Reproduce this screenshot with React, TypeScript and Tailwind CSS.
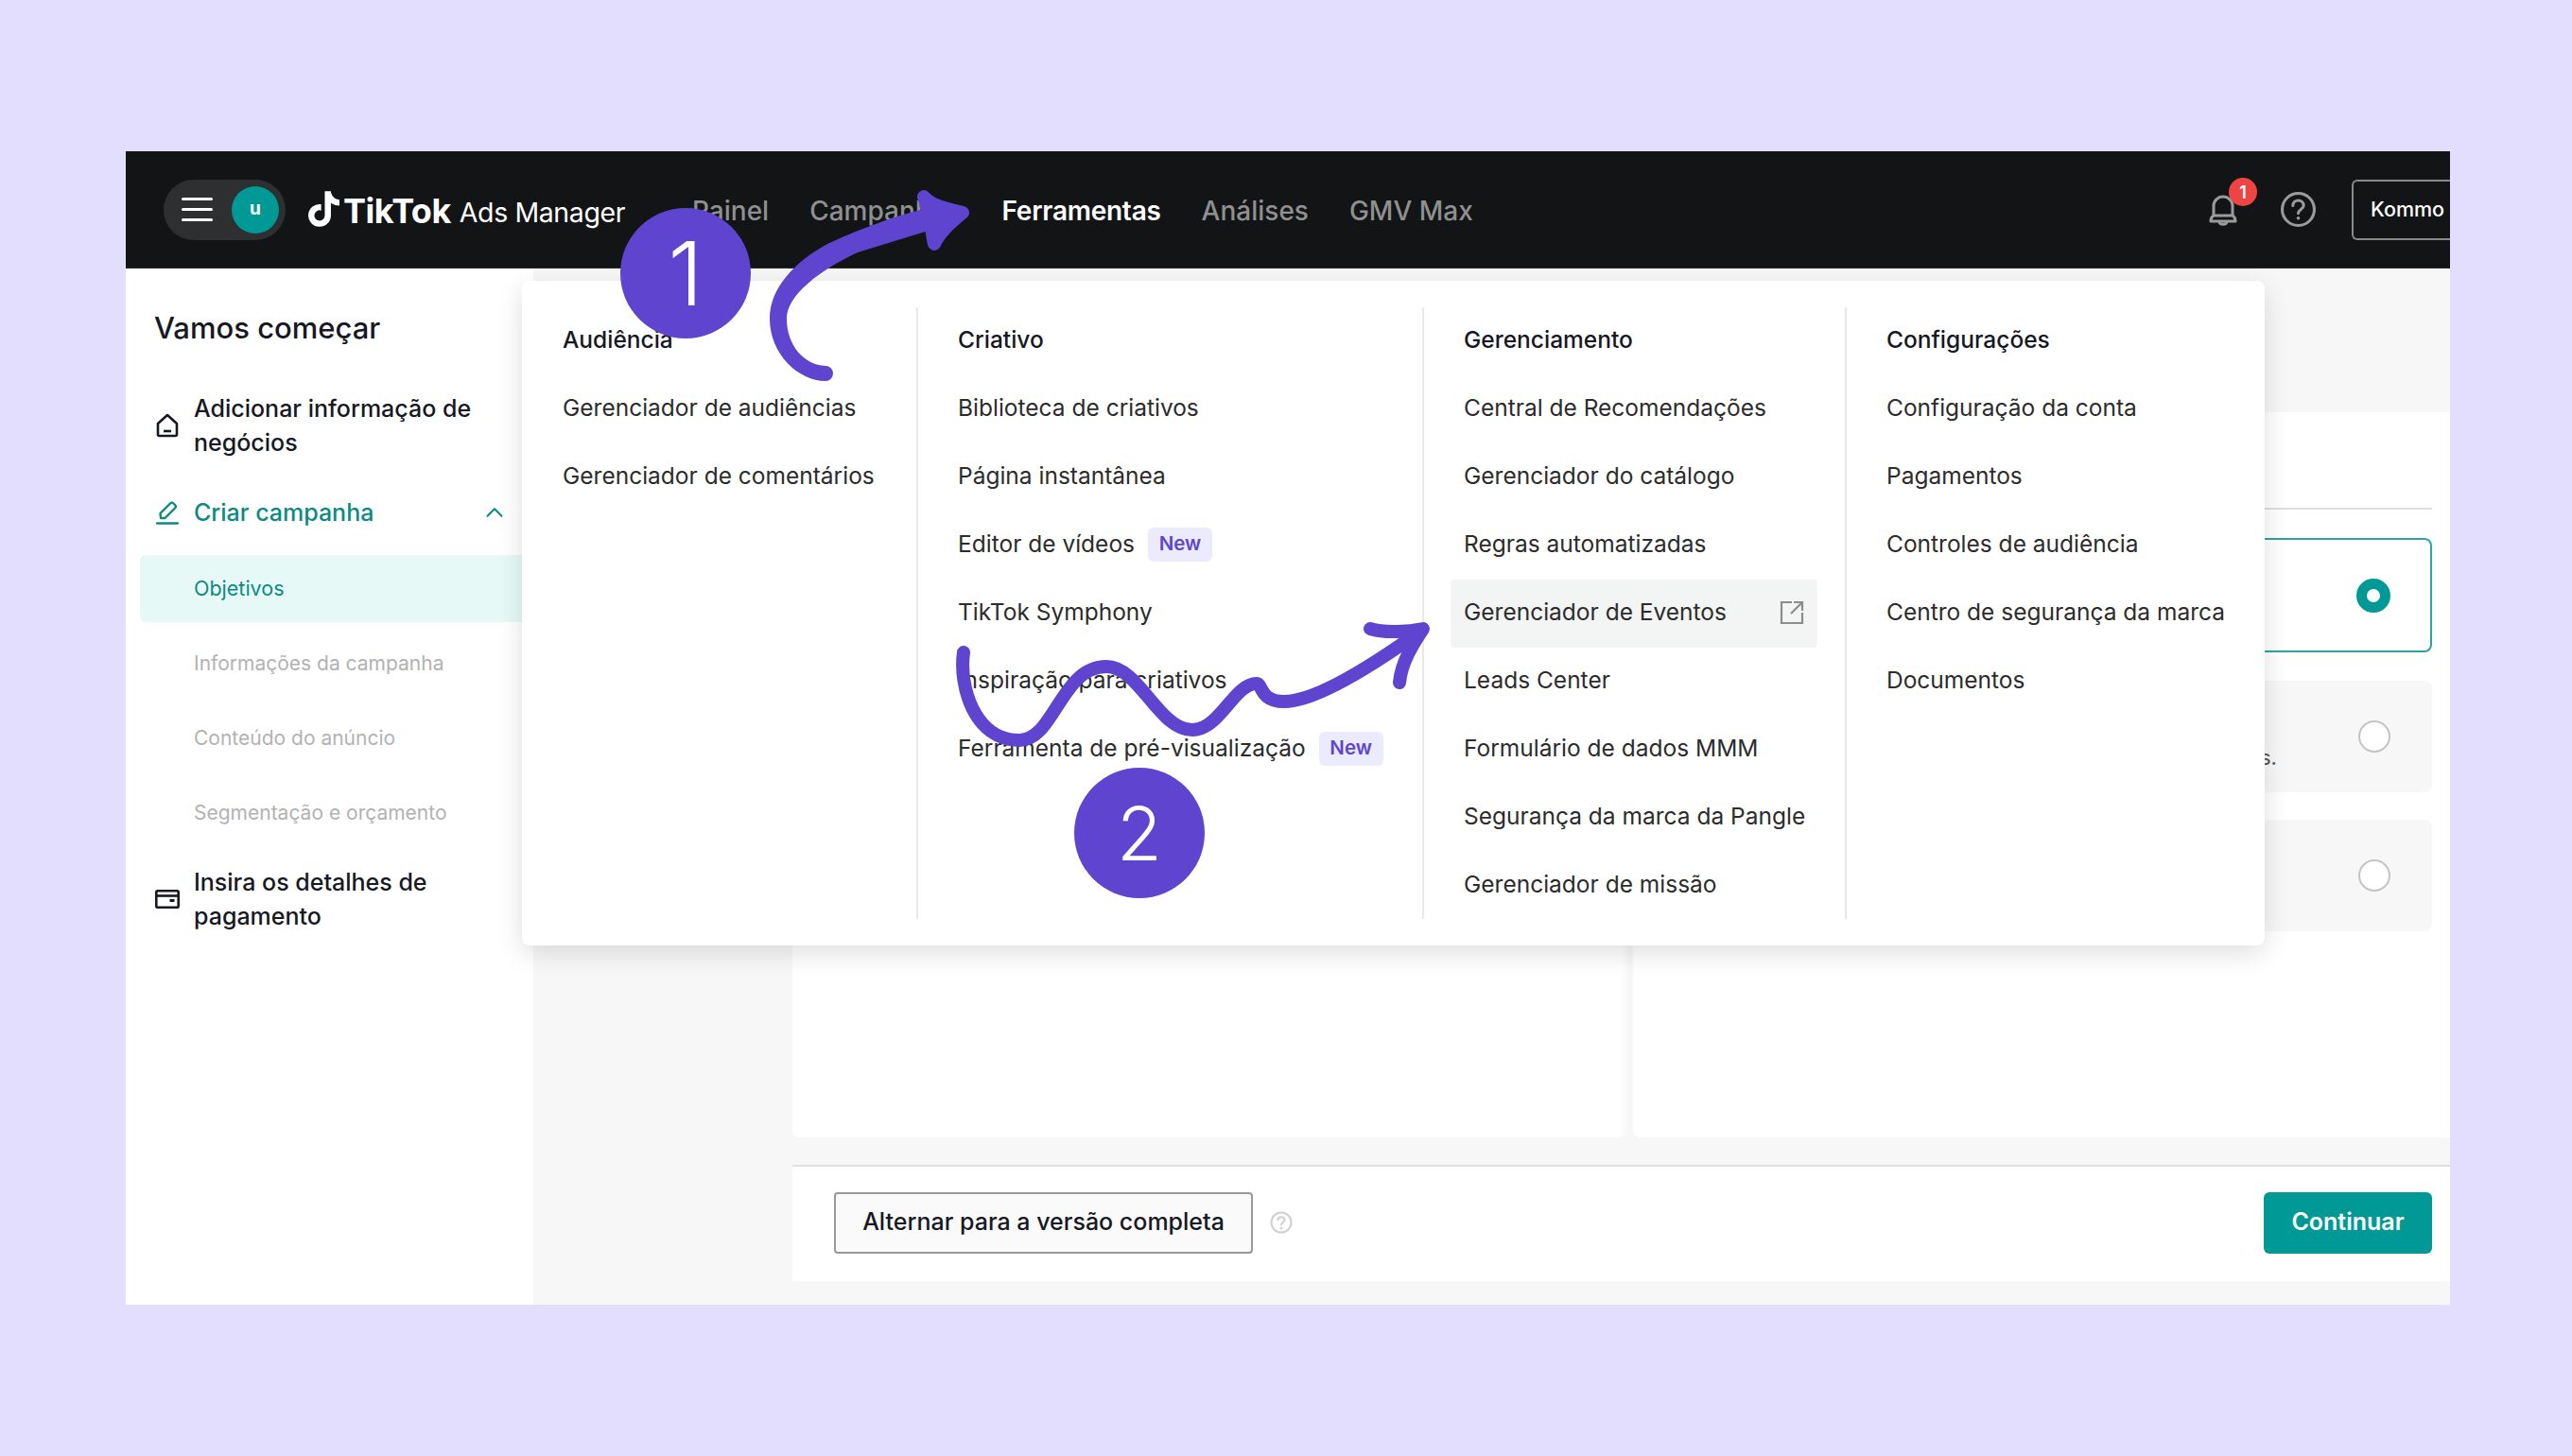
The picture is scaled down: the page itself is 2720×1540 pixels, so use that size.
import { ChevronUp } from "lucide-react";
import { FaTiktok } from "react-icons/fa6";

const navItems = ["Painel", "Campanha", "Ferramentas", "Análises", "GMV Max"];

type MenuItem = { label: string; badge?: boolean; hovered?: boolean };

const columns: { title: string; width: string; items: MenuItem[] }[] = [
  {
    title: "Audiência",
    width: "w-[417px] pl-[43px]",
    items: [{ label: "Gerenciador de audiências" }, { label: "Gerenciador de comentários" }],
  },
  {
    title: "Criativo",
    width: "w-[535px] border-l-2 pl-[42px]",
    items: [
      { label: "Biblioteca de criativos" },
      { label: "Página instantânea" },
      { label: "Editor de vídeos", badge: true },
      { label: "TikTok Symphony" },
      { label: "Inspiração para criativos" },
      { label: "Ferramenta de pré-visualização", badge: true },
    ],
  },
  {
    title: "Gerenciamento",
    width: "w-[447px] border-l-2 pl-[42px]",
    items: [
      { label: "Central de Recomendações" },
      { label: "Gerenciador do catálogo" },
      { label: "Regras automatizadas" },
      { label: "Gerenciador de Eventos", hovered: true },
      { label: "Leads Center" },
      { label: "Formulário de dados MMM" },
      { label: "Segurança da marca da Pangle" },
      { label: "Gerenciador de missão" },
    ],
  },
  {
    title: "Configurações",
    width: "flex-1 border-l-2 pl-[42px]",
    items: [
      { label: "Configuração da conta" },
      { label: "Pagamentos" },
      { label: "Controles de audiência" },
      { label: "Centro de segurança da marca" },
      { label: "Documentos" },
    ],
  },
];

function Navbar() {
  return (
    <header className="flex h-[124px] shrink-0 items-center bg-[#131416] border-b border-[#2a2a2a]">
      <div className="ml-[40px] flex h-[64px] w-[129px] items-center rounded-full bg-[#2e2f31] pl-[19px]">
        <div className="flex w-[33px] flex-col gap-[8px]">
          <span className="h-[3px] rounded-full bg-white" />
          <span className="h-[3px] rounded-full bg-white" />
          <span className="h-[3px] rounded-full bg-white" />
        </div>
        <div className="ml-[20px] flex h-[50px] w-[50px] items-center justify-center rounded-full bg-[#009995] text-[19px] font-bold text-white">
          u
        </div>
      </div>
      <FaTiktok className="ml-[24px] mb-[2px] h-[38px] w-[33px] text-white" />
      <span className="ml-[4px] mt-[2px] text-[36px] leading-none font-bold tracking-[-0.5px] text-white">TikTok</span>
      <span className="ml-[9px] mt-[7px] text-[28.5px] leading-none tracking-[-0.4px] text-white">Ads Manager</span>
      <nav className="ml-[71px] mt-[3px] flex text-[28px] font-medium text-[#8f9090]">
        <span>{navItems[0]}</span>
        <span className="ml-[43px]">{navItems[1]}</span>
        <span className="ml-[59px] font-semibold tracking-[-0.25px] text-white">{navItems[2]}</span>
        <span className="ml-[43px]">{navItems[3]}</span>
        <span className="ml-[43px]">{navItems[4]}</span>
      </nav>
      <div className="ml-auto flex items-center">
        <div className="relative h-[37px] w-[34px]">
          <svg viewBox="0 0 34 37" className="h-full w-full" fill="none" stroke="#9b9b9b" strokeWidth="3">
            <path d="M7 25V15a10 10 0 0 1 20 0v10" />
            <path d="M4 31c0-3 1-5 3-6h20c2 1 3 3 3 6z" strokeLinejoin="round" />
            <path d="M13 32c1 3 7 3 8 0" />
          </svg>
          <span className="absolute -top-[15px] left-[23px] flex h-[30px] w-[30px] items-center justify-center rounded-full bg-[#ef4444] text-[18px] font-semibold text-white">
            1
          </span>
        </div>
        <svg viewBox="0 0 36 36" className="ml-[44px] h-[37px] w-[37px]" fill="none" stroke="#9b9b9b" strokeWidth="3">
          <circle cx="18" cy="18" r="16.5" />
          <path d="M12.5 14c0-7 11-7 11 0 0 4-5.500 4-5.500 8" strokeLinecap="round" />
          <circle cx="18" cy="27" r="1" fill="#9b9b9b" strokeWidth="1.500" />
        </svg>
        <div className="ml-[38px] flex h-[64px] w-[104px] items-center rounded-l-[6px] border-y-2 border-l-2 border-[#8a8a8a] pl-[18px] text-[21.5px] font-medium whitespace-nowrap text-white">
          Kommo
        </div>
      </div>
    </header>
  );
}

function HomeIcon() {
  return (
    <svg viewBox="0 0 24 26" className="h-[26px] w-[24px] shrink-0" fill="none" stroke="#161823" strokeWidth="2.600" strokeLinejoin="round">
      <path d="M2 11 12 2l10 9v11.500a1.500 1.500 0 0 1-1.500 1.500h-17A1.500 1.500 0 0 1 2 22.500z" />
      <path d="M8 19h8" />
    </svg>
  );
}

function PencilIcon() {
  return (
    <svg viewBox="0 0 24 25" className="h-[25px] w-[24px] shrink-0" fill="none" stroke="#0b8a84" strokeWidth="2.400" strokeLinejoin="round">
      <path d="M5 18 4.500 13 15 2.500a2.500 2.500 0 0 1 3.500 0l1.500 1.500a2.500 2.500 0 0 1 0 3.500L9.500 18z" />
      <path d="M1 23.500h22" strokeLinecap="round" />
    </svg>
  );
}

function CardIcon() {
  return (
    <svg viewBox="0 0 26 20" className="h-[20px] w-[26px] shrink-0" fill="none" stroke="#161823" strokeWidth="2.600">
      <rect x="1.300" y="1.300" width="23.400" height="17.400" rx="1.500" />
      <path d="M1.300 6.500h23.400" />
      <path d="M15.500 11.500h5" strokeWidth="3" />
    </svg>
  );
}

function Sidebar() {
  return (
    <aside className="w-[431px] shrink-0 bg-white pt-[43px]">
      <h2 className="ml-[30px] text-[31px] leading-[40px] font-medium text-[#161823]">Vamos começar</h2>
      <div className="mt-[47px] ml-[32px] flex items-center gap-[16px]">
        <HomeIcon />
        <p className="w-[320px] text-[25px] leading-[36px] font-medium text-[#161823]">Adicionar informação de negócios</p>
      </div>
      <div className="mt-[38px] ml-[32px] flex items-center gap-[16px]">
        <PencilIcon />
        <p className="text-[25px] leading-[36px] font-medium text-[#0b8a84]">Criar campanha</p>
        <ChevronUp className="ml-auto mr-[26px] h-[30px] w-[30px] text-[#0b8a84]" strokeWidth={1.6} />
      </div>
      <div className="mt-[27px] ml-[15px] flex h-[71px] items-center rounded-l-[6px] bg-[#e6f9f7] pl-[57px] text-[21.5px] text-[#0b8a84]">
        Objetivos
      </div>
      <div className="mt-[4px] pl-[72px] text-[21px] text-[#b2b2b2]">
        <p className="flex h-[79px] items-center">Informações da campanha</p>
        <p className="flex h-[79px] items-center">Conteúdo do anúncio</p>
        <p className="flex h-[79px] items-center">Segmentação e orçamento</p>
      </div>
      <div className="mt-[16px] ml-[31px] flex items-center gap-[15px]">
        <CardIcon />
        <p className="w-[320px] text-[25px] leading-[36px] font-medium text-[#161823]">Insira os detalhes de pagamento</p>
      </div>
    </aside>
  );
}

function Radio({ checked }: { checked?: boolean }) {
  if (checked) {
    return <div className="h-[36px] w-[36px] rounded-full border-[11px] border-[#009995] bg-white" />;
  }
  return <div className="h-[34px] w-[34px] rounded-full border-2 border-[#c4c4c4] bg-white" />;
}

function Main() {
  return (
    <main className="flex flex-1 flex-col bg-[#f7f7f7] pl-[274px]">
      <div className="mt-[152px] flex h-[767px] gap-[5px]">
        <section className="w-[884px] rounded-b-[8px] bg-white shadow-[inset_-12px_0_10px_-10px_rgba(0,0,0,0.05)]" />
        <section className="flex-1 rounded-bl-[8px] bg-white pl-[18px] pr-[19px]">
          <div className="h-[103px] border-b-2 border-[#dedede]" />
          <div className="mt-[30px] flex h-[121px] items-center justify-end rounded-[8px] border-2 border-[#2aa5a0] pr-[42px]">
            <Radio checked />
          </div>
          <div className="mt-[30px] flex h-[118px] items-center justify-between rounded-[8px] bg-[#f7f7f7] pl-[645px] pr-[44px]">
            <span className="mt-[44px] text-[22px] text-[#555]">s.</span>
            <Radio />
          </div>
          <div className="mt-[29px] flex h-[118px] items-center justify-end rounded-[8px] bg-[#f7f7f7] pr-[44px]">
            <Radio />
          </div>
        </section>
      </div>
      <div className="mt-[29px] flex h-[123px] items-center border-t-2 border-[#dedede] bg-white pb-[3px] pl-[44px] pr-[19px]">
        <button className="flex h-[65px] w-[443px] items-center justify-center rounded-[4px] border-2 border-[#999] bg-[#fafafa] text-[25px] font-medium text-[#161823]">
          Alternar para a versão completa
        </button>
        <svg viewBox="0 0 24 24" className="ml-[18px] h-[24px] w-[24px]" fill="none" stroke="#d0d0d0" strokeWidth="2">
          <circle cx="12" cy="12" r="10.500" />
          <path d="M8.500 9.500c0-4.500 7-4.500 7 0 0 2.500-3.500 2.500-3.500 5" strokeLinecap="round" />
          <circle cx="12" cy="18" r="0.600" />
        </svg>
        <button className="ml-auto h-[65px] w-[178px] rounded-[6px] bg-[#009995] text-[25px] font-semibold text-white">Continuar</button>
      </div>
    </main>
  );
}

function MenuRow({ item }: { item: MenuItem }) {
  if (item.hovered) {
    return (
      <div className="-ml-[14px] flex h-[72px] w-[388px] items-center justify-between rounded-[4px] bg-[#f3f4f4] pb-[3px] pl-[14px] pr-[14px]">
        {item.label}
        <svg viewBox="0 0 26 26" className="h-[26px] w-[26px]" fill="none" stroke="#8c8c8c" strokeWidth="2.200">
          <path d="M13 2H2v22h22V13" />
          <path d="M15 2h9v9M24 2 12 14" />
        </svg>
      </div>
    );
  }
  return (
    <div className="flex h-[72px] items-center gap-[14px] pb-[3px] whitespace-nowrap">
      {item.label}
      {item.badge && (
        <span className="flex h-[36px] w-[68px] items-center justify-center rounded-[6px] bg-[#eceafd] text-[20.5px] font-semibold text-[#5f46cf]">
          New
        </span>
      )}
    </div>
  );
}

function ToolsMenu() {
  return (
    <div className="absolute top-[137px] left-[419px] flex h-[703px] w-[1843px] rounded-[8px] bg-white py-[28px] text-[24.5px] text-[#2c2c2c] shadow-[0_8px_28px_rgba(0,0,0,0.13)]">
      {columns.map((col) => (
        <div key={col.title} className={`h-[647px] border-[#e8e8e8] ${col.width}`}>
          <h3 className="flex h-[72px] items-center pb-[3px] font-medium text-[#161823]">{col.title}</h3>
          {col.items.map((item) => (
            <MenuRow key={item.label} item={item} />
          ))}
        </div>
      ))}
    </div>
  );
}

// the purple arrows and numbers drawn on top of the screenshot, in page coordinates
function Annotations() {
  return (
    <>
      <svg viewBox="133 160 2458 1220" className="absolute inset-0 h-[1220px] w-[2458px]">
        <path
          fill="#5e44cf"
          d="M873 387C850 386 832 365 832 337C832 312 868 285 907 267L985 243L985 220C960 223 907 243 875 258C840 277 814 305 814 337C814 375 845 403 873 403A8 8 0 0 0 873 387Z"
        />
        <path
          fill="#5e44cf"
          stroke="#5e44cf"
          strokeWidth="14"
          strokeLinejoin="round"
          d="M977 208C985 218 1005 222 1018 225C1005 235 994 245 988 258C985 245 985 230 977 208Z"
        />
        <path
          fill="none"
          stroke="#5e44cf"
          strokeWidth="14"
          strokeLinecap="round"
          strokeLinejoin="round"
          d="M1019 690C1014 725 1030 783 1078 783C1115 783 1122 705 1170 705C1205 705 1225 772 1261 772C1290 772 1305 723 1329 723C1335 723 1332 742 1358 742C1390 742 1450 705 1503 667"
        />
        <path
          fill="none"
          stroke="#5e44cf"
          strokeWidth="14"
          strokeLinecap="round"
          strokeLinejoin="round"
          d="M1449 665C1465 670 1490 668 1505 665C1495 680 1482 700 1480 722"
        />
      </svg>
      <div className="absolute top-[60px] left-[523px] flex h-[138px] w-[138px] items-center justify-center rounded-full bg-[#5e44cf] text-[94px] font-light text-white">
        1
      </div>
      <div className="absolute top-[652px] left-[1003px] flex h-[138px] w-[138px] items-center justify-center rounded-full bg-[#5e44cf] text-[78px] font-light text-white">
        2
      </div>
    </>
  );
}

export default function App() {
  return (
    <div className="h-[1540px] w-[2720px] bg-[#e3defd] pt-[160px] pl-[133px] font-['Inter','Noto_Sans',sans-serif]">
      <div className="relative flex h-[1220px] w-[2458px] flex-col overflow-hidden">
        <Navbar />
        <div className="flex flex-1">
          <Sidebar />
          <Main />
        </div>
        <ToolsMenu />
        <Annotations />
      </div>
    </div>
  );
}
